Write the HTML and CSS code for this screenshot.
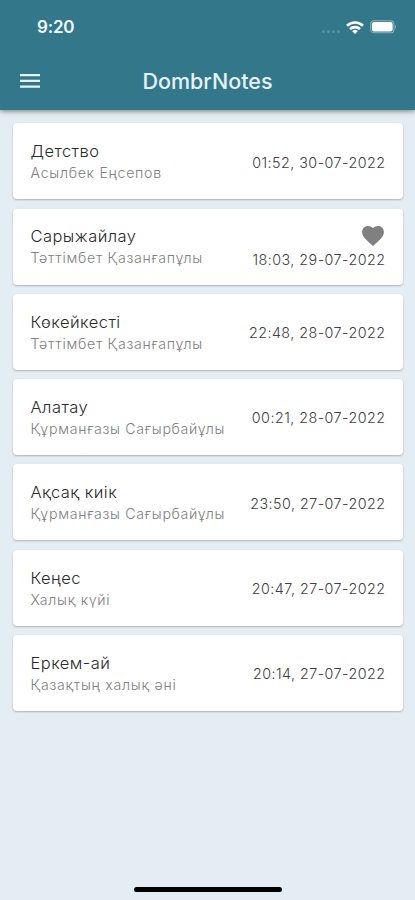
FILE: index.html
```html
<!DOCTYPE html>
<html lang="kk">
<head>
<meta charset="utf-8">
<meta name="viewport" content="width=device-width, initial-scale=1">
<title>DombrNotes</title>
<link rel="stylesheet" href="styles.css">
</head>
<body>
<header class="header">
  <div class="status">
    <span class="clock">9:20</span>
    <div class="indicators">
      <span class="signal"><i></i><i></i><i></i><i></i></span>
      <svg class="wifi" viewBox="0 0 18 13" fill="none" stroke="#fff" stroke-width="2.6"><path d="M1 4.8a11.4 11.4 0 0 1 16 0M4 8.2a7.1 7.1 0 0 1 10 0"/><path d="M9 13 6.2 10.2a4 4 0 0 1 5.6 0Z" fill="#fff" stroke="none"/></svg>
      <svg class="battery" viewBox="0 0 27 14"><rect x=".7" y=".7" width="23.2" height="12.1" rx="3.4" fill="none" stroke="#8fb3be" stroke-width="1.1"/><rect x="2" y="2" width="20.6" height="9.5" rx="2" fill="#fff"/><path d="M25 4.7q2 2 0 4Z" fill="#8fb3be"/></svg>
    </div>
  </div>
  <div class="bar">
    <svg class="menu" viewBox="0 0 20 14" fill="#e7f1f7"><path d="M0 0h20v2.2H0zM0 5.8h20V8H0zM0 11.6h20v2.2H0z"/></svg>
    <h1 class="heading">DombrNotes</h1>
  </div>
</header>
<main class="list">
  <article class="card"><div class="piece"><h2 class="title">Детство</h2><p class="author">Асылбек Еңсепов</p></div><div class="side"><time class="date">01:52, 30-07-2022</time></div></article>
  <article class="card"><div class="piece"><h2 class="title">Сарыжайлау</h2><p class="author">Тәттімбет Қазанғапұлы</p></div><div class="side"><svg class="heart" viewBox="2 3 20 18.35" fill="#808080"><path d="m12 21.35-1.45-1.32C5.4 15.36 2 12.28 2 8.5 2 5.42 4.42 3 7.5 3c1.74 0 3.41.81 4.5 2.09C13.09 3.81 14.76 3 16.5 3 19.58 3 22 5.42 22 8.5c0 3.78-3.4 6.86-8.55 11.54z"/></svg><time class="date">18:03, 29-07-2022</time></div></article>
  <article class="card"><div class="piece"><h2 class="title">Көкейкесті</h2><p class="author">Тәттімбет Қазанғапұлы</p></div><div class="side"><time class="date">22:48, 28-07-2022</time></div></article>
  <article class="card"><div class="piece"><h2 class="title">Алатау</h2><p class="author">Құрманғазы Сағырбайұлы</p></div><div class="side"><time class="date">00:21, 28-07-2022</time></div></article>
  <article class="card"><div class="piece"><h2 class="title">Ақсақ киік</h2><p class="author">Құрманғазы Сағырбайұлы</p></div><div class="side"><time class="date">23:50, 27-07-2022</time></div></article>
  <article class="card"><div class="piece"><h2 class="title">Кеңес</h2><p class="author">Халық күйі</p></div><div class="side"><time class="date">20:47, 27-07-2022</time></div></article>
  <article class="card"><div class="piece"><h2 class="title">Еркем-ай</h2><p class="author">Қазақтың халық әні</p></div><div class="side"><time class="date">20:14, 27-07-2022</time></div></article>
</main>
<footer class="footer"><div class="home"></div></footer>
</body>
</html>
```
FILE: styles.css
```css
* { box-sizing: border-box; margin: 0; padding: 0; }
body {
  height: 900px;
  display: flex;
  flex-direction: column;
  background: #e4edf4;
  font-family: Inter, "Liberation Sans", sans-serif;
  overflow: hidden;
}
.header {
  height: 110px;
  flex: none;
  background: #33788a;
  box-shadow: 0 1px 5px rgba(0, 0, 0, .5);
}
.status {
  height: 52px;
  padding: 2px 18px 0 37px;
  display: flex;
  align-items: center;
  justify-content: space-between;
}
.clock { color: #f4fafc; font-size: 17px; font-weight: 600; letter-spacing: -.2px; }
.indicators { display: flex; align-items: center; }
.signal { display: flex; gap: 2px; margin: 8px 6px 0 0; }
.signal i { width: 3px; height: 3px; border-radius: 50%; background: #5a909f; }
.wifi { width: 18px; height: 13px; margin-right: 6px; }
.battery { width: 27px; height: 14px; }
.bar {
  height: 58px;
  padding: 0 20px;
  display: grid;
  grid-template-columns: 20px 1fr 20px;
  align-items: center;
}
.menu { width: 20px; height: 14px; }
.heading { color: #e7f1f7; font-size: 21.5px; font-weight: 500; line-height: 24px; text-align: center; }
.list {
  flex: 1;
  padding: 13.3px 12px 0 13px;
  display: flex;
  flex-direction: column;
  gap: 9.3px;
}
.card {
  height: 76px;
  padding: 0 18px 0 17.5px;
  display: flex;
  justify-content: space-between;
  align-items: center;
  background: #fff;
  border-radius: 4px;
  box-shadow: 0 1px 2px rgba(0, 0, 0, .25);
}
.piece { padding-top: 1.5px; }
.title { color: #2a2a2a; font-size: 16.5px; font-weight: 350; letter-spacing: .45px; line-height: 22px; }
.author { color: #808080; font-size: 14.2px; font-weight: 300; letter-spacing: .7px; line-height: 22px; }
.side { display: flex; flex-direction: column; align-items: flex-end; padding-top: 2.5px; }
.date { color: #404040; font-size: 14.3px; font-weight: 350; letter-spacing: .46px; line-height: 20px; margin-right: -.5px; }
.heart { width: 22px; height: 20px; margin: 1px 1px 4px 0; }
.footer { height: 13px; flex: none; display: flex; justify-content: center; }
.home { width: 148px; height: 5px; border-radius: 3px; background: #000; }
```
